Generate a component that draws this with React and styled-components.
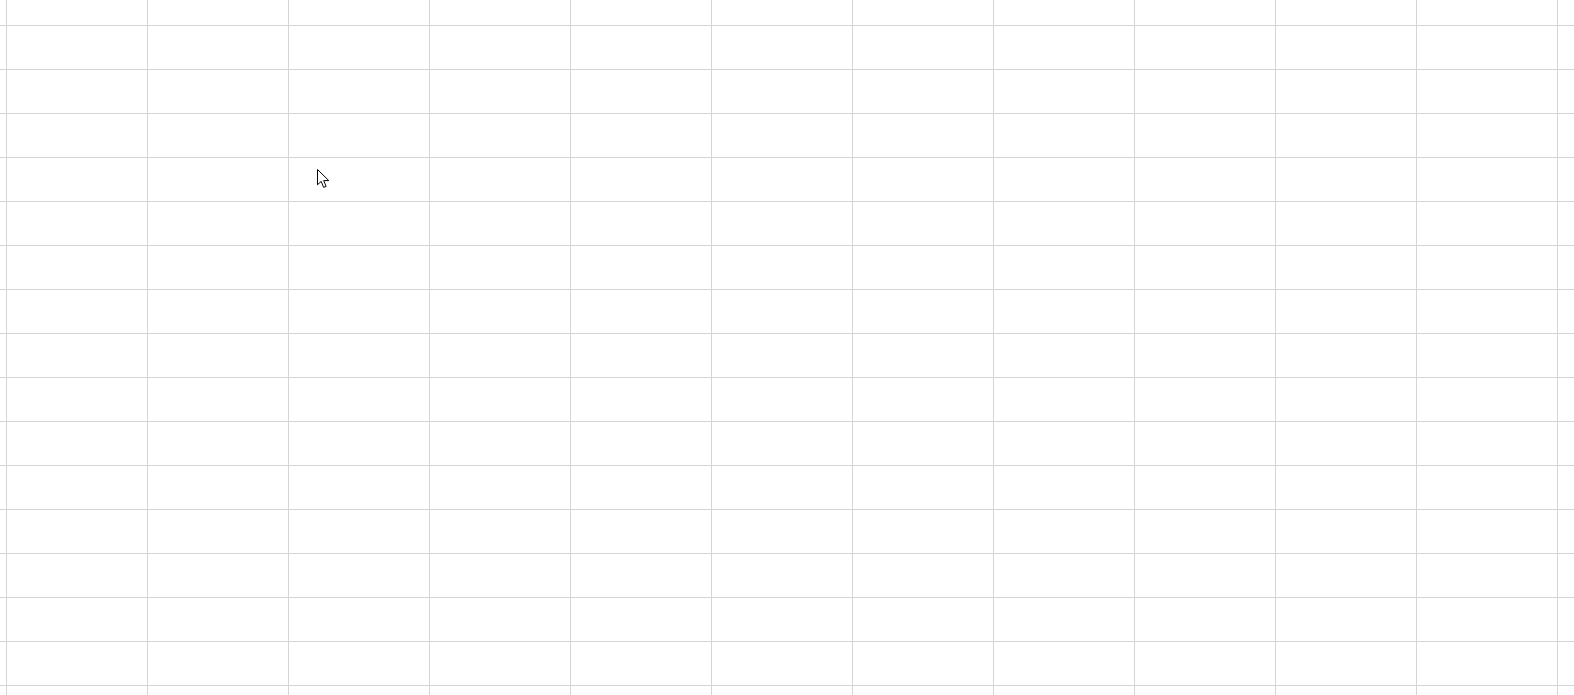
import React from 'react';
import styled, { createGlobalStyle } from 'styled-components';

const GlobalStyle = createGlobalStyle`
  html, body {
    margin: 0;
    padding: 0;
    background: #ffffff;
    overflow: hidden;
    font-family: "Liberation Sans", Arial, sans-serif;
  }
`;

const Sheet = styled.div`
  position: relative;
  width: 1574px;
  height: 695px;
  overflow: hidden;
  background: #ffffff;
`;

const Grid = styled.div`
  display: grid;
  grid-template-columns: 6px repeat(11, 140px) 16px;
  grid-template-rows: 25px repeat(15, 43px) 9px;
  gap: 1px;
  background: #d4d4d4;
  width: 1574px;
  height: 695px;
`;

const Cell = styled.div`
  background: #ffffff;
`;

const Pointer = styled.svg`
  position: absolute;
  left: 317px;
  top: 169px;
  pointer-events: none;
`;

const COLS = 13;
const ROWS = 17;

export default function App() {
  const cells = [];
  for (let r = 0; r < ROWS; r += 1) {
    for (let c = 0; c < COLS; c += 1) {
      cells.push(<Cell key={`${r}-${c}`} />);
    }
  }

  return (
    <>
      <GlobalStyle />
      <Sheet>
        <Grid>{cells}</Grid>
        <Pointer width="14" height="20" viewBox="0 0 14 20">
          <path
            d="M0.5 0.5 L0.5 15.8 L4.2 12.4 L6.6 18.4 L9.1 17.4 L6.7 11.6 L11.8 11.6 Z"
            fill="#ffffff"
            stroke="#000000"
            strokeWidth="1"
            strokeLinejoin="miter"
          />
        </Pointer>
      </Sheet>
    </>
  );
}
